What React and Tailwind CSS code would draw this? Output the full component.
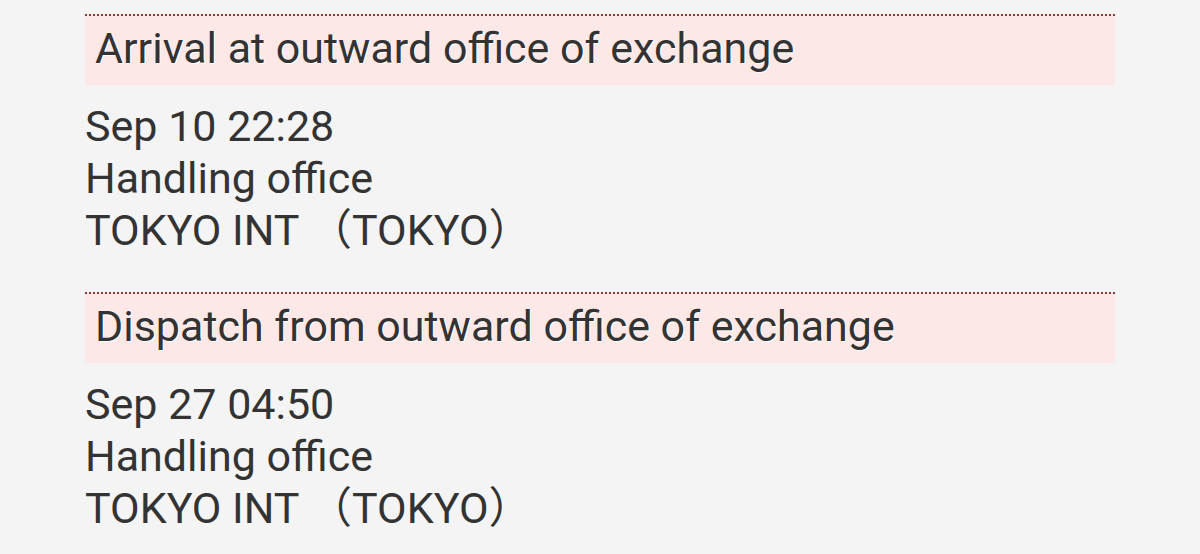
import React from "react";

const events = [
  { title: "Arrival at outward office of exchange", date: "Sep 10 22:28" },
  { title: "Dispatch from outward office of exchange", date: "Sep 27 04:50" },
];

const Event = ({ title, date }) => (
  <div className="mb-[36px]">
    <div className="border-t-2 border-dotted border-[#8b3a3a] bg-[#fde8e8] pl-[10px] pt-[6px] pb-[11px] text-[#333] [text-shadow:1px_1px_0_#fff]">
      {title}
    </div>
    <div className="mt-[15px] text-[#333]">
      <div>{date}</div>
      <div>Handling office</div>
      <div>
        TOKYO INT<span className="tracking-[-12px]">　</span>（TOKYO）
      </div>
    </div>
  </div>
);

export default function App() {
  return (
    <div
      className="min-h-[554px] w-[1200px] bg-[#f4f4f4] px-[85px] pt-[14px] text-[43px] leading-[52px]"
      style={{ fontFamily: "Roboto, 'Noto Sans CJK JP', sans-serif" }}
    >
      {events.map((e) => (
        <Event key={e.title} {...e} />
      ))}
    </div>
  );
}
